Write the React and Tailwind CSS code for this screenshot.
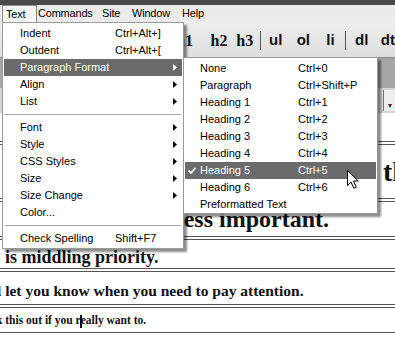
import React from 'react';

const MAIN_ITEMS = [
  { label: 'Indent', shortcut: 'Ctrl+Alt+]' },
  { label: 'Outdent', shortcut: 'Ctrl+Alt+[' },
  { label: 'Paragraph Format', sub: true, active: true },
  { label: 'Align', sub: true },
  { label: 'List', sub: true },
  { sep: true },
  { label: 'Font', sub: true },
  { label: 'Style', sub: true },
  { label: 'CSS Styles', sub: true },
  { label: 'Size', sub: true },
  { label: 'Size Change', sub: true },
  { label: 'Color...' },
  { sep: true },
  { label: 'Check Spelling', shortcut: 'Shift+F7' },
];

const FORMAT_ITEMS = [
  { label: 'None', shortcut: 'Ctrl+0' },
  { label: 'Paragraph', shortcut: 'Ctrl+Shift+P' },
  { label: 'Heading 1', shortcut: 'Ctrl+1' },
  { label: 'Heading 2', shortcut: 'Ctrl+2' },
  { label: 'Heading 3', shortcut: 'Ctrl+3' },
  { label: 'Heading 4', shortcut: 'Ctrl+4' },
  { label: 'Heading 5', shortcut: 'Ctrl+5', active: true },
  { label: 'Heading 6', shortcut: 'Ctrl+6' },
  { label: 'Preformatted Text' },
];

const sans = "font-['Liberation_Sans',Arial,sans-serif]";
const serif = "font-['Liberation_Serif','Times_New_Roman',serif]";

function Arrow({ white }) {
  return (
    <svg width="4" height="7" viewBox="0 0 4 7" className="shrink-0">
      <path d="M0 0 L4 3.5 L0 7 Z" fill={white ? '#fff' : '#000'} />
    </svg>
  );
}

function Check() {
  return (
    <svg width="8" height="7" viewBox="0 0 8 7">
      <path d="M0.5 3.5 L3 6 L7.5 0.8" stroke="#fff" strokeWidth="1.8" fill="none" />
    </svg>
  );
}

function Separator() {
  return (
    <div className="h-[9px] flex items-center px-[2px]">
      <div className="h-px w-full bg-[#a6a6a6]" />
    </div>
  );
}

function MainMenu() {
  return (
    <div className="absolute left-[2px] top-[22px] w-[182px] bg-white border border-[#9a9a9a] pt-[2px] pb-[1px] shadow-[3px_3px_2px_rgba(0,0,0,0.45)]">
      {MAIN_ITEMS.map((item, i) =>
        item.sep ? (
          <Separator key={i} />
        ) : (
          <div
            key={i}
            className={`h-[17px] flex items-center mx-[1px] ${item.active ? 'bg-[#6b6b6b] text-white' : 'text-black'}`}
          >
            <span className="w-[111px] pl-[16px] whitespace-nowrap">{item.label}</span>
            <span className="whitespace-nowrap">{item.shortcut}</span>
            {item.sub && (
              <span className="ml-auto mr-[5px] flex items-center">
                <Arrow white={item.active} />
              </span>
            )}
          </div>
        )
      )}
    </div>
  );
}

function FormatMenu() {
  return (
    <div className="absolute left-[183px] top-[57px] w-[195px] bg-white border border-[#9a9a9a] pt-[2px] shadow-[3px_3px_2px_rgba(0,0,0,0.45)]">
      {FORMAT_ITEMS.map((item, i) => (
        <div
          key={i}
          className={`h-[17px] flex items-center mx-[1px] ${item.active ? 'bg-[#6b6b6b] text-white' : 'text-black'}`}
        >
          <span className="w-[15px] pl-[3px] flex items-center">{item.active && <Check />}</span>
          <span className="min-w-[98px] whitespace-nowrap">{item.label}</span>
          {item.shortcut && <span className="whitespace-nowrap">{item.shortcut}</span>}
        </div>
      ))}
    </div>
  );
}

function Pointer() {
  return (
    <svg className="absolute left-[346px] top-[169px]" width="14" height="21" viewBox="0 0 14 21">
      <path
        d="M1.5 1.5 L1.5 16.5 L5 13 L7.8 19.3 L10.2 18.2 L7.5 12 L12.3 12 Z"
        fill="#fff"
        stroke="#000"
        strokeWidth="1"
        strokeLinejoin="round"
      />
    </svg>
  );
}

export default function App() {
  return (
    <div className={`relative w-[395px] h-[337px] overflow-hidden bg-white text-[11px] ${sans}`}>
      {/* title strip */}
      <div className="h-[5px] bg-[#4a4a4a]" />

      {/* menu bar */}
      <div className="h-[17px] bg-[#ececec] flex items-center text-[11px] tracking-[-0.2px] text-black">
        <div className="ml-[2px] w-[35px] h-[17px] pl-[3px] flex items-center bg-[#f6f6f6] border border-[#8c8c8c] border-b-0">
          Text
        </div>
        <div className="w-[65px] pl-[1px]">Commands</div>
        <div className="w-[30px]">Site</div>
        <div className="w-[50px]">Window</div>
        <div>Help</div>
      </div>

      {/* insert toolbar */}
      <div className="h-[36px] bg-gradient-to-b from-[#efefef] to-[#dedede] border-b border-[#8a8a8a] flex items-center pt-[2px] pl-[176px] text-[#111]">
        <span className={`${serif} font-bold text-[16px] w-[35px]`}>h1</span>
        <span className={`${serif} font-bold text-[16px] w-[26px]`}>h2</span>
        <span className={`${serif} font-bold text-[16px] w-[24px]`}>h3</span>
        <span className="w-px h-[19px] bg-[#555] mr-[8px]" />
        <span className="font-bold text-[15px] w-[28px]">ul</span>
        <span className="font-bold text-[15px] w-[30px]">ol</span>
        <span className="font-bold text-[15px] w-[19px]">li</span>
        <span className="w-px h-[19px] bg-[#555] mr-[9px]" />
        <span className="font-bold text-[15px] w-[26px]">dl</span>
        <span className="font-bold text-[15px]">dt</span>
      </div>

      {/* panel bars */}
      <div className="h-[30px] bg-[#a6a6a6]" />
      <div className="h-[25px] bg-[#d4d4d4] flex justify-end items-end pb-[2px]">
        <div className="w-[12px] h-[21px] bg-[#eeeeee] border-l border-[#777] flex items-end justify-center text-[8px] leading-[10px] text-[#333]">
          ▾
        </div>
      </div>

      {/* document */}
      <div className={`${serif} font-bold text-[#111]`}>
        <div className="h-[32px] border-b-4 border-double border-[#555]" />
        <div className="h-[57px] border-b-4 border-double border-[#555] flex items-center pl-[383px] text-[28px] whitespace-nowrap overflow-hidden">
          the most important.
        </div>
        <div className="h-[38px] border-b-4 border-double border-[#555] flex items-center pl-[177px] text-[24px] whitespace-nowrap overflow-hidden">
          less important.
        </div>
        <div className="h-[32px] border-b-4 border-double border-[#555] flex items-center pt-[6px] pl-[5px] text-[18px] whitespace-nowrap overflow-hidden">
          is middling priority.
        </div>
        <div className="h-[36px] border-b-4 border-double border-[#555] flex items-center pt-[5px] text-[15.5px] whitespace-nowrap overflow-hidden">
          <span className="-ml-[3px]">l let you know when you need to pay attention.</span>
        </div>
        <div className="h-[25px] border-b border-[#555] flex items-center pt-[2px] text-[11.5px] whitespace-nowrap overflow-hidden">
          <span className="-ml-[4px]">
            k this out if you r
            <span className="inline-block w-[2px] h-[13px] bg-black align-middle -mx-[1px]" />
            eally want to.
          </span>
        </div>
      </div>

      <MainMenu />
      <FormatMenu />
      <Pointer />
    </div>
  );
}
